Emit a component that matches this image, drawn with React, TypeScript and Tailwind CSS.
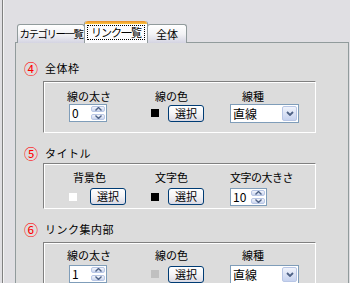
import React from 'react';

const font = { fontFamily: '"Noto Sans CJK JP", "Noto Sans", sans-serif' };

const Chevron: React.FC<{ up?: boolean }> = ({ up }) => (
  <svg width="7" height="4" viewBox="0 0 7 4" className="block">
    <path d={up ? 'M0.5 3.5 L3.5 0.5 L6.5 3.5' : 'M0.5 0.5 L3.5 3.5 L6.5 0.5'} fill="none" stroke="#4d6185" strokeWidth="1.4" />
  </svg>
);

const Spin: React.FC<{ value: string; width: number }> = ({ value, width }) => (
  <div className="flex h-[18px] border border-[#7f9db9] bg-white" style={{ width }}>
    <span className="flex-1 pl-[2px] text-[12px] leading-[16px] text-black">{value}</span>
    <div className="my-[1px] mr-[1px] flex w-[14px] flex-col">
      <div className="flex h-[7px] items-center justify-center rounded-[2px] border border-[#b8c6e5] bg-gradient-to-b from-[#f3f5fb] to-[#c9d4ee]">
        <Chevron up />
      </div>
      <div className="mt-[2px] flex h-[7px] items-center justify-center rounded-[2px] border border-[#b8c6e5] bg-gradient-to-b from-[#f3f5fb] to-[#c9d4ee]">
        <Chevron />
      </div>
    </div>
  </div>
);

const Select: React.FC = () => (
  <div className="flex h-[19px] w-[69px] border border-[#7f9db9] bg-white">
    <span className="flex-1 pl-[2px] text-[12px] leading-[17px] text-black">直線</span>
    <div className="m-[1px] flex w-[15px] items-center justify-center rounded-[2px] border border-[#b8c6e5] bg-gradient-to-b from-[#f0f3fb] to-[#c6d2ef]">
      <svg width="8" height="5" viewBox="0 0 8 5">
        <path d="M1 1 L4 4 L7 1" fill="none" stroke="#4d6185" strokeWidth="1.8" />
      </svg>
    </div>
  </div>
);

const PickButton: React.FC = () => (
  <div className="flex h-[17px] w-[36px] items-center justify-center rounded-[3px] border border-[#003c74] bg-gradient-to-b from-white via-[#f4f4f6] to-[#d9d9e4] text-[11px] leading-none text-black">
    選択
  </div>
);

const Swatch: React.FC<{ color: string }> = ({ color }) => (
  <div className={`h-[8px] w-[8px] ${color}`} />
);

const Header: React.FC<{ num: string; title: string; mt: string }> = ({ num, title, mt }) => (
  <div className={`flex h-[16px] items-center pl-[8px] ${mt}`}>
    <span className="w-[21px] text-[14px] leading-none text-[#ff0000]">{num}</span>
    <span className="text-[11px] leading-none tracking-[0.5px] text-black">{title}</span>
  </div>
);

const boxClass =
  'ml-[27px] w-[273px] border border-t-[#808080] border-l-[#808080] border-r-white border-b-white shadow-[inset_1px_1px_0_#ffffff]';

const tabText = 'whitespace-nowrap leading-none text-black';

export default function App() {
  return (
    <div className="flex h-[283px] w-[350px] overflow-hidden bg-[#e0dfe3]" style={font}>
      <div className="ml-[2px] w-[1px] bg-[#808080]" />
      <div className="w-[1px] bg-[#f4f4f4]" />
      <div className="flex flex-1 flex-col pl-[11px] pt-[21px]">
        {/* tabs */}
        <div className="relative z-10 -mb-[1px] flex h-[22px] items-end pl-[2px]">
          <div className={`flex h-[19px] w-[68px] items-center justify-center rounded-t-[3px] border border-b-0 border-[#919b9c] bg-gradient-to-b from-white via-[#f3f3f5] to-[#d4d4e2] text-[10.5px] tracking-[-1.5px] ${tabText}`}>
            カテゴリー一覧
          </div>
          <div className="-ml-[1px] flex h-[22px] w-[64px] flex-col rounded-t-[3px] border border-b-0 border-t-0 border-[#919b9c] bg-[#fcfcfe]">
            <div className="h-[3px] rounded-t-[3px] bg-gradient-to-b from-[#e68b2c] to-[#ffc73c]" />
            <div className={`mx-[2px] mt-[1px] flex h-[15px] items-center justify-center border border-dotted border-black text-[11px] tracking-[-1px] ${tabText}`}>
              リンク一覧
            </div>
          </div>
          <div className={`-ml-[1px] flex h-[19px] w-[40px] items-center justify-center rounded-t-[3px] border border-b-0 border-[#919b9c] bg-gradient-to-b from-white via-[#f3f3f5] to-[#d4d4e2] text-[11px] tracking-[0px] ${tabText}`}>
            全体
          </div>
        </div>

        {/* panel */}
        <div className="h-[260px] w-[334px] border border-[#919b9c] bg-[#dcdcdc]">
          <Header num="④" title="全体枠" mt="mt-[17px]" />
          <div className={`${boxClass} mt-[5px] pb-[9px] pt-[7px]`}>
            <div className="grid grid-cols-[84px_79px_1fr] gap-y-[1px] pl-[23px] text-[11px] leading-[14px] text-black">
              <div>線の太さ</div>
              <div className="pl-[4px]">線の色</div>
              <div className="pl-[12px]">線種</div>
              <div className="pl-[2px]"><Spin value="0" width={38} /></div>
              <div className="flex h-[18px] items-center gap-[9px]">
                <Swatch color="bg-black" />
                <PickButton />
              </div>
              <div><Select /></div>
            </div>
          </div>

          <Header num="⑤" title="タイトル" mt="mt-[12px]" />
          <div className={`${boxClass} mt-[2px] pb-[2px] pt-[6px]`}>
            <div className="grid grid-cols-[84px_79px_1fr] gap-y-[4px] pl-[23px] text-[11px] leading-[14px] text-black">
              <div className="pl-[6px]">背景色</div>
              <div className="pl-[4px]">文字色</div>
              <div className="tracking-[-0.5px]">文字の大きさ</div>
              <div className="flex h-[17px] items-center gap-[13px] pl-[2px]">
                <Swatch color="bg-white" />
                <PickButton />
              </div>
              <div className="flex h-[17px] items-center gap-[9px]">
                <Swatch color="bg-black" />
                <PickButton />
              </div>
              <div><Spin value="10" width={37} /></div>
            </div>
          </div>

          <Header num="⑥" title="リンク集内部" mt="mt-[12px]" />
          <div className={`${boxClass} mt-[5px] pb-[9px] pt-[5px]`}>
            <div className="grid grid-cols-[84px_79px_1fr] gap-y-[3px] pl-[23px] text-[11px] leading-[14px] text-black">
              <div>線の太さ</div>
              <div className="pl-[4px]">線の色</div>
              <div className="pl-[12px]">線種</div>
              <div className="pl-[2px]"><Spin value="1" width={38} /></div>
              <div className="flex h-[18px] items-center gap-[9px]">
                <Swatch color="bg-[#c0c0c0]" />
                <PickButton />
              </div>
              <div><Select /></div>
            </div>
          </div>
        </div>
      </div>
    </div>
  );
}
